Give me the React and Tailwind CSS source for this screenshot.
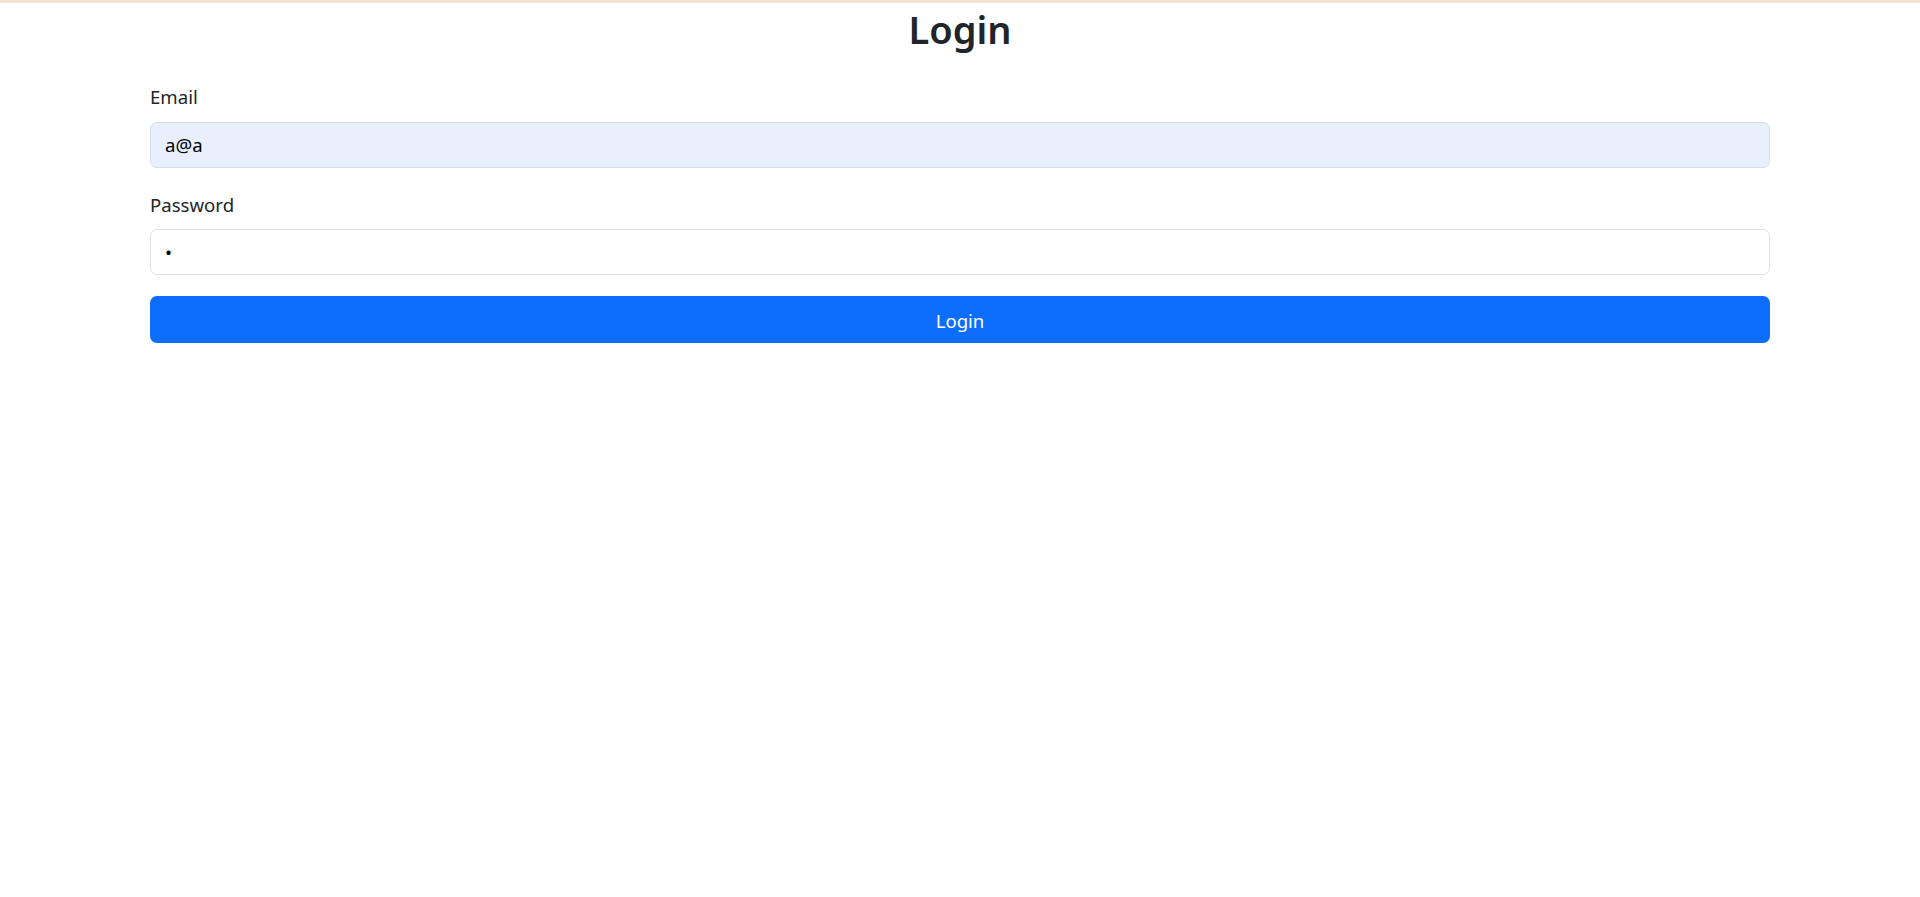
export default function App() {
  return (
    <div className="min-h-screen bg-white text-[#212529]" style={{ fontFamily: '"Segoe UI", "Noto Sans", sans-serif' }}>
      <div className="h-[3px] w-full bg-[#f6e4d4]" />
      <div className="px-[150px]">
        <h2 className="mt-[3px] text-center text-[38px] font-semibold leading-[46px]">Login</h2>
        <form className="mt-[31px] flex flex-col" onSubmit={(e) => e.preventDefault()}>
          <label className="text-[18.6px] leading-[28.8px]">Email</label>
          <input
            className="mt-[10px] h-[46px] w-full rounded-[7px] border border-[#d3dcea] bg-[#e8f0fe] px-[14px] text-[18.6px] text-black outline-none"
            defaultValue="a@a"
          />
          <label className="mt-[23px] text-[18.6px] leading-[28.8px]">Password</label>
          <input
            type="password"
            className="mt-[9px] h-[46px] w-full rounded-[7px] border border-[#dee2e6] bg-white px-[14px] text-[18.6px] text-black outline-none"
            defaultValue="a"
          />
          <button
            type="submit"
            className="mt-[21px] h-[47px] w-full rounded-[7px] bg-[#0d6efd] pt-[3px] text-[18.6px] text-white"
          >
            Login
          </button>
        </form>
      </div>
    </div>
  );
}
